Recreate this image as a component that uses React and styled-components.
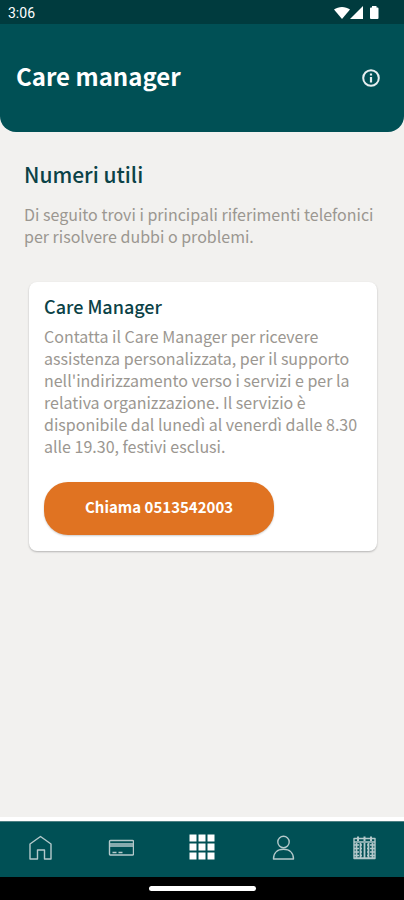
import styled, { createGlobalStyle } from "styled-components";

const GlobalStyle = createGlobalStyle`
  * {
    box-sizing: border-box;
  }
  body {
    margin: 0;
    background: #f2f1ef;
    font-family: "Noto Sans CJK SC", "Noto Sans", sans-serif;
  }
`;

const Screen = styled.div`
  display: flex;
  flex-direction: column;
  min-height: 100vh;
`;

const StatusBar = styled.div`
  display: flex;
  align-items: center;
  justify-content: space-between;
  height: 24px;
  padding: 2px 24px 0 8px;
  background: #003b3e;
  color: #fff;
  font-family: Roboto, sans-serif;
  font-size: 14px;
`;

const StatusIcons = styled.svg`
  width: 46px;
  height: 16px;
  fill: #fff;
`;

const StyledHeader = styled.header`
  display: flex;
  align-items: center;
  justify-content: space-between;
  height: 108px;
  padding: 0 24px 0 16px;
  border-radius: 0 0 16px 16px;
  background: #005055;
  color: #fff;
`;

const PageTitle = styled.h1`
  margin: 0;
  padding-bottom: 4px;
  font-size: 24px;
  line-height: 32px;
  font-weight: 700;
`;

const InfoButton = styled.button`
  display: flex;
  padding: 0;
  border: 0;
  background: none;
  color: #e6eef0;
`;

const Main = styled.main`
  flex: 1;
  padding: 28px 24px;
`;

const SectionTitle = styled.h2`
  margin: 0 0 15px;
  color: #0b4247;
  font-size: 21px;
  line-height: 28px;
  font-weight: 500;
`;

const Text = styled.p`
  margin: 0;
  color: #9b9791;
  font-size: 16px;
  line-height: 22px;
`;

const Card = styled.section`
  margin: 35px 3px 0 5px;
  padding: 13px 15px 16px;
  border-radius: 8px;
  background: #fff;
  box-shadow: 0 1px 2px rgba(0, 0, 0, 0.25);
`;

const CardTitle = styled.h3`
  margin: 0 0 8px;
  color: #0b4247;
  font-size: 18px;
  line-height: 22px;
  font-weight: 500;
`;

const CallButton = styled.button`
  display: block;
  height: 53px;
  margin-top: 25px;
  padding: 0 41px 4px;
  border: 0;
  border-radius: 24px;
  background: #e07322;
  box-shadow: 0 1px 2px rgba(0, 0, 0, 0.2);
  color: #fff;
  font-family: inherit;
  font-size: 15px;
  font-weight: 700;
  white-space: nowrap;
`;

const NavBar = styled.nav`
  display: flex;
  height: 60px;
  border-top: 4px solid #fff;
  background: #005055;
  box-shadow: inset 0 1px 0 #4d8083;
`;

const NavLink = styled.a`
  display: flex;
  flex: 1;
  align-items: center;
  justify-content: center;
  padding-bottom: 4px;
  color: ${(props) => (props.$active ? "#fff" : "#b4c9cb")};
`;

const NavIcon = styled.svg`
  width: 26px;
  height: 26px;
  fill: none;
  stroke: currentColor;
  stroke-width: 1.4;
  stroke-linejoin: round;
`;

const GestureBar = styled.div`
  display: flex;
  justify-content: center;
  height: 23px;
  padding-top: 9px;
  background: #000;

  &::after {
    content: "";
    width: 107px;
    height: 5px;
    border-radius: 3px;
    background: #fff;
  }
`;

const cells = [0, 9, 18];

const navItems = [
  {
    label: "Home",
    icon: <path d="M3 10 13.500 2.500 24 10V25H17.500V16h-7v9H3z" />,
  },
  {
    label: "Tessera",
    icon: (
      <>
        <rect x="1.500" y="6.500" width="24" height="14.500" rx="1" />
        <path d="M1.500 10h24M1.500 12h24M4.500 18.500h4M10.500 18.500h4" />
      </>
    ),
  },
  {
    label: "Servizi",
    active: true,
    icon: cells.map((y) =>
      cells.map((x) => (
        <rect
          key={`${x}-${y}`}
          x={x + 0.5}
          y={y + 0.5}
          width="7"
          height="7"
          fill="currentColor"
          stroke="none"
        />
      ))
    ),
  },
  {
    label: "Profilo",
    icon: (
      <>
        <circle cx="13.500" cy="8" r="5.700" />
        <path d="M3.500 25c0-6 3.800-9.700 10-9.700s10 3.700 10 9.700z" />
      </>
    ),
  },
  {
    label: "Calendario",
    icon: (
      <>
        <path d="M3 4.500h21v20H3zM3 8h21M3 24h21" />
        <path strokeWidth="2" d="M7 2.500V7M13.500 2.500V7M20 2.500V7" />
        <path strokeWidth="1.800" d="M5.500 9v15M9.500 9v15M13.500 9v15M17.500 9v15M21.500 9v15" />
        <path
          strokeWidth="1.600"
          strokeDasharray="2 1"
          d="M3 11h8M3 14.500h8M3 18h8M3 21.500h8M16 11h8M16 14.500h8M16 18h8M16 21.500h8"
        />
      </>
    ),
  },
];

const Header = () => (
  <StyledHeader>
    <PageTitle>Care manager</PageTitle>
    <InfoButton aria-label="Informazioni">
      <svg width="18" height="18" viewBox="0 0 18 18" fill="none" stroke="currentColor">
        <circle cx="9" cy="9" r="7.800" strokeWidth="2" />
        <path d="M9 8v5.500M9 4.500v2" strokeWidth="2.200" />
      </svg>
    </InfoButton>
  </StyledHeader>
);

const Nav = () => (
  <NavBar>
    {navItems.map(({ label, icon, active }) => (
      <NavLink key={label} href="#" aria-label={label} $active={active}>
        <NavIcon viewBox="0 0 26 26">{icon}</NavIcon>
      </NavLink>
    ))}
  </NavBar>
);

export default function App() {
  return (
    <Screen>
      <GlobalStyle />
      <StatusBar>
        <span>3:06</span>
        <StatusIcons viewBox="0 0 46 16">
          <path d="M0 4.500C4.500 1 11.500 1 16 4.500L8 14z" />
          <path d="M29 1v13H16z" />
          <path d="M36 3.500q0-1 1-1h1V1h4.500v1.500h1q1 0 1 1V13q0 1-1 1H37q-1 0-1-1z" />
        </StatusIcons>
      </StatusBar>
      <Header />
      <Main>
        <SectionTitle>Numeri utili</SectionTitle>
        <Text>
          Di seguito trovi i principali riferimenti telefonici per risolvere dubbi o problemi.
        </Text>
        <Card>
          <CardTitle>Care Manager</CardTitle>
          <Text>
            Contatta il Care Manager per ricevere assistenza personalizzata, per il supporto
            nell'indirizzamento verso i servizi e per la relativa organizzazione. Il servizio è
            disponibile dal lunedì al venerdì dalle 8.30 alle 19.30, festivi esclusi.
          </Text>
          <CallButton>Chiama 0513542003</CallButton>
        </Card>
      </Main>
      <Nav />
      <GestureBar />
    </Screen>
  );
}
